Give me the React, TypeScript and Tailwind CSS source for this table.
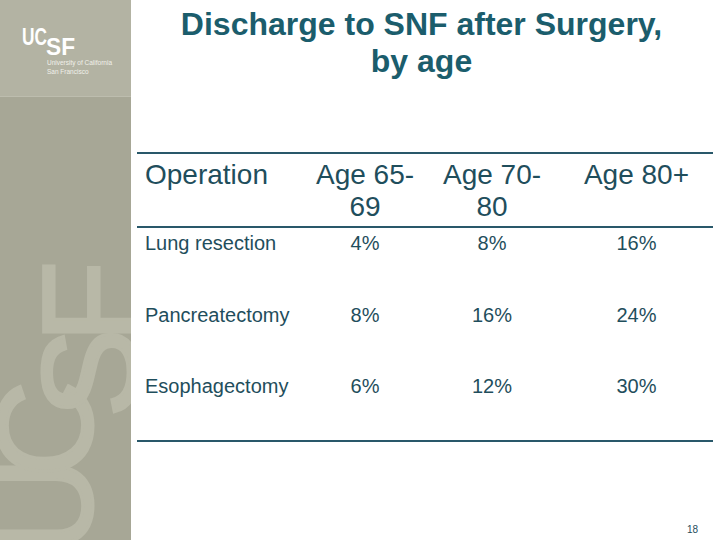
const rows = [
  { op: "Lung resection", a: "4%", b: "8%", c: "16%" },
  { op: "Pancreatectomy", a: "8%", b: "16%", c: "24%" },
  { op: "Esophagectomy", a: "6%", b: "12%", c: "30%" },
];

// row heights so the bottom rule lands at y=440
const rowH = ["h-[72px]", "h-[71px]", "h-[69px]"];

function Sidebar() {
  return (
    <aside className="relative w-[131px] shrink-0 flex flex-col overflow-hidden bg-[#a7a796]">
      <div className="h-[97px] bg-[#b3b3a3] border-b border-[#bdbdae]">
        <svg width="131" height="96" className="block">
          <g fill="#ffffff" fontFamily="'Liberation Sans', Arial, sans-serif">
            <text x="22" y="45" fontSize="23" fontWeight="700" textLength="25" lengthAdjust="spacingAndGlyphs">
              UC
            </text>
            <text x="46" y="55" fontSize="23" fontWeight="700" textLength="29" lengthAdjust="spacingAndGlyphs">
              SF
            </text>
          </g>
          <g fill="#f1f1ea" fontFamily="'Liberation Sans', Arial, sans-serif" fontSize="6.5">
            <text x="47" y="65">University of California</text>
            <text x="47" y="74">San Francisco</text>
          </g>
        </svg>
      </div>
      <div className="flex-1" />

      {/* big rotated watermark */}
      <svg width="131" height="540" className="absolute inset-0 pointer-events-none">
        <g
          fill="#b8b8a7"
          stroke="#b8b8a7"
          strokeWidth="3"
          fontFamily="'Liberation Sans', Arial, sans-serif"
          fontSize="135"
        >
          <text transform="translate(92 554) rotate(-90)">U</text>
          <text transform="translate(92 478) rotate(-90)">C</text>
          <text transform="translate(137 418) rotate(-90)">S</text>
          <text transform="translate(137 343) rotate(-90)">F</text>
        </g>
      </svg>
    </aside>
  );
}

export default function App() {
  return (
    <div className="flex w-[720px] h-[540px] bg-white font-['Liberation_Sans',Arial,sans-serif]">
      <Sidebar />

      <main className="flex-1 flex flex-col">
        <h1 className="pt-[6px] pr-2 text-center text-[32px] leading-[37px] font-bold text-[#1b5d6c]">
          Discharge to SNF after Surgery,
          <br />
          by age
        </h1>

        {/* table */}
        <div className="mt-[72px] ml-[6px] w-[576px] border-t-2 border-b-2 border-[#29586a] text-[#1f4e5c]">
          <div className="grid grid-cols-[169px_118px_136px_153px] border-b-2 border-[#29586a] pt-[5px] pb-[3px] text-[28px] leading-[32px]">
            <div className="pl-2">Operation</div>
            <div className="text-center">
              Age 65-
              <br />
              69
            </div>
            <div className="text-center">
              Age 70-
              <br />
              80
            </div>
            <div className="text-center">Age 80+</div>
          </div>

          {rows.map((r, i) => (
            <div
              key={r.op}
              className={`grid grid-cols-[169px_118px_136px_153px] pt-[3px] text-[20px] leading-[24px] ${rowH[i]}`}
            >
              <div className="pl-2">{r.op}</div>
              <div className="text-center">{r.a}</div>
              <div className="text-center">{r.b}</div>
              <div className="text-center">{r.c}</div>
            </div>
          ))}
        </div>

        <div className="flex-1" />
        <div className="pr-[22px] pb-[4px] text-right text-[10px] leading-[12px] text-[#1f4e5c]">18</div>
      </main>
    </div>
  );
}
